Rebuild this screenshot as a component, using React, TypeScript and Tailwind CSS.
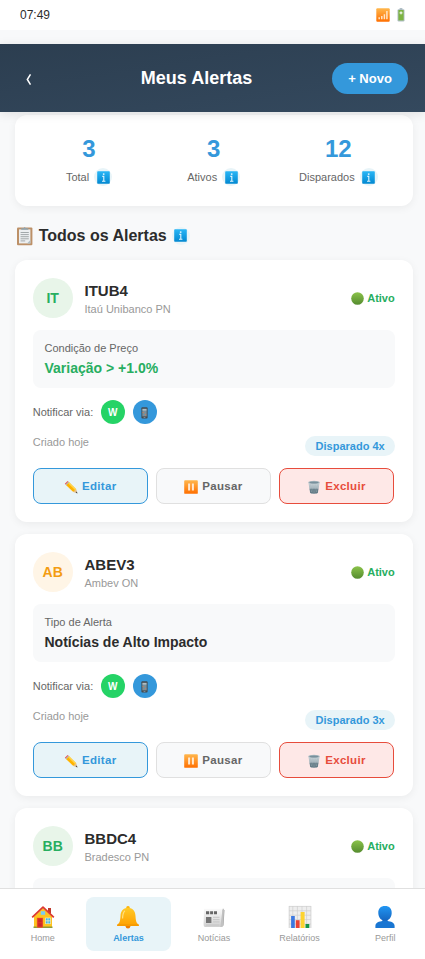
import React from "react";

type Alert = {
  code: string; ticker: string; name: string; label: string; value: string;
  valueColor: string; avatar: string; count: string;
};

const alerts: Alert[] = [
  { code: "IT", ticker: "ITUB4", name: "Itaú Unibanco PN", label: "Condição de Preço", value: "Variação > +1.0%", valueColor: "text-[#27ae60]", avatar: "bg-[#e8f5e9] text-[#27ae60]", count: "4x" },
  { code: "AB", ticker: "ABEV3", name: "Ambev ON", label: "Tipo de Alerta", value: "Notícias de Alto Impacto", valueColor: "text-[#2c2c2c]", avatar: "bg-[#fff5e6] text-[#f39c12]", count: "3x" },
];

const stats = [["3", "Total"], ["3", "Ativos"], ["12", "Disparados"]];

function Gradients() {
  const defs = [
    ["gOrange", "#ffb74d", "#ff6f00"], ["gBlue", "#29b6f6", "#0288d1"], ["gGreen", "#8bc34a", "#558b2f"],
    ["gBell", "#ffca28", "#ffa000"], ["gUser", "#2196f3", "#1565c0"], ["gPaper", "#fafafa", "#d0d0d0"],
    ["gBin", "#cfd8dc", "#78909c"],
  ];
  return (
    <svg width="0" height="0" className="absolute">
      <defs>
        {defs.map(([id, a, b]) => (
          <linearGradient key={id} id={id} x1="0" y1="0" x2="0" y2="1">
            <stop offset="0" stopColor={a} /><stop offset="1" stopColor={b} />
          </linearGradient>
        ))}
      </defs>
    </svg>
  );
}

function SignalIcon() {
  return (
    <svg width="14" height="14" viewBox="0 0 14 14">
      <rect x="0.3" y="0.3" width="13.4" height="13.4" rx="1" fill="url(#gOrange)" />
      <path d="M3.2 9.3v2M5.8 8v3.3M8.4 6.3v5M10.9 3v8.3" stroke="#ffe5c7" strokeWidth="1.5" />
    </svg>
  );
}

function BatteryIcon() {
  return (
    <svg width="8" height="14" viewBox="0 0 8 14">
      <rect x="2.6" y="0.3" width="2.8" height="1.6" fill="#90a4ae" />
      <rect x="0.5" y="1.3" width="7" height="12.2" rx="1.2" fill="#b0bec5" />
      <rect x="1.4" y="2" width="5.2" height="10.4" fill="#7cb342" />
      <path d="M4 3.4v3M2.5 4.9h3" stroke="#fff" strokeWidth="1" />
    </svg>
  );
}

function Info() {
  return (
    <span className="flex h-[18px] w-[18px] items-center justify-center rounded-full bg-[#e8f4f8]">
      <svg width="13" height="13" viewBox="0 0 13 13">
        <rect x="0.2" y="0.2" width="12.6" height="12.6" rx="0.8" fill="url(#gBlue)" />
        <circle cx="6.7" cy="3.1" r="0.95" fill="#e1f5fe" />
        <path d="M5.3 5.4h1.5v4.8M5 10.3h3.4" fill="none" stroke="#e1f5fe" strokeWidth="1.1" />
      </svg>
    </span>
  );
}

function ClipboardIcon() {
  return (
    <svg width="18" height="20" viewBox="0 0 18 20">
      <rect x="1" y="1.6" width="15.4" height="17.6" rx="1" fill="#bc9067" />
      <rect x="3" y="3.4" width="11.4" height="14" fill="#eceff1" />
      <path d="M14.4 14v3.4H11z" fill="#b0bec5" />
      <path d="M5.2 3.8V2.2h2.3L8.7 1l1.2 1.2h2.4v1.6z" fill="#90a4ae" />
      <path d="M4.6 6.5h8.2M4.6 8.6h8.2M4.6 10.7h8.2M4.6 12.8h8.2M4.6 14.9h4.6" stroke="#9aa0a3" strokeWidth="0.9" />
    </svg>
  );
}

function PhoneIcon() {
  return (
    <svg width="7" height="12" viewBox="0 0 7 12">
      <rect x="0.4" y="0.3" width="6.2" height="11.2" rx="0.9" fill="#454b50" />
      <rect x="1.3" y="1.7" width="4.4" height="7.7" fill="#78909c" />
      <path d="M1.6 2h3.8v1.6H1.6z" fill="#b0bec5" />
      <path d="M1.6 5h1.2v1H1.6zM4 7.3h1.2v1H4z" fill="#c77d5b" />
      <path d="M2.6 10.5h1.8" stroke="#90a4ae" strokeWidth="0.7" />
    </svg>
  );
}

function PencilIcon() {
  return (
    <svg width="14" height="14" viewBox="0 0 14 14">
      <path d="M3.6.9.8 3.7 2.2 5.1 5 2.3z" fill="#ef5350" />
      <path d="M4.3 1.6 1.5 4.4l1 1 2.8-2.8z" fill="#b0bec5" />
      <path d="M5.1 2.3 2.2 5.2l7.1 6.8 2.9-2.8z" fill="#ffb300" />
      <path d="M5.1 2.3l-1 1 7.1 6.9 1-1z" fill="#ffd54f" />
      <path d="M12.2 9.2 9.3 12l4 1.3z" fill="#e5bd86" />
      <path d="m12.8 11.6-1.1 1.2 1.8.6z" fill="#424242" />
    </svg>
  );
}

function PauseIcon() {
  return (
    <svg width="14" height="14" viewBox="0 0 14 14">
      <rect x="0.2" y="0.2" width="13.6" height="13.6" rx="0.9" fill="url(#gOrange)" />
      <path d="M5.1 3.5v7M8.9 3.5v7" stroke="#ffe9d2" strokeWidth="2" />
    </svg>
  );
}

function TrashIcon() {
  return (
    <svg width="14" height="14" viewBox="0 0 14 14">
      <path d="M1.4 2.5h11.2l-1.7 10.2c-.8 1.2-7 1.2-7.8 0z" fill="url(#gBin)" />
      <path d="M2.7 8.8h8.6l-.6 3.7c-.8 1.2-6.6 1.2-7.4 0z" fill="#546e7a" />
      <path d="M3.3 4.3l1.1 8M5.7 4.5l.4 8.3M8.3 4.5l-.4 8.3M10.7 4.3l-1.1 8" stroke="#b0bec5" strokeWidth="0.6" />
      <ellipse cx="7" cy="2.4" rx="5.8" ry="1.7" fill="#b0bec5" />
      <ellipse cx="7" cy="2.5" rx="4.6" ry="1" fill="#78909c" />
    </svg>
  );
}

function HomeIcon() {
  return (
    <svg width="24" height="24" viewBox="0 0 24 24">
      <path d="M17 3h3v6l-3-2z" fill="#c0392b" />
      <path d="M3 11.5 12 3l9 8.5v11H3z" fill="#ffc31f" />
      <path d="M2.5 21.5h19V23h-19z" fill="#8d9a3b" />
      <path d="M5.6 12.5h6.6v10H5.6z" fill="#f0a01c" />
      <path d="M6.2 13h5.6v9.5H6.2z" fill="#e3342c" />
      <path d="M7.3 14.3h3.4v3H7.3zM7.3 18.3h3.4v3H7.3z" fill="#c92a25" />
      <rect x="14.2" y="12.7" width="5.5" height="6.3" fill="#fff3c2" />
      <path d="M14.8 13.3h1.9v2.2h-1.9zM17.3 13.3h1.9v2.2h-1.9zM14.8 16.3h1.9v2.2h-1.9zM17.3 16.3h1.9v2.2h-1.9z" fill="#40b7e8" />
      <rect x="9.8" y="6.2" width="4.4" height="3.6" fill="#7cccef" />
      <path d="M1.2 12.3 12 2.2l10.8 10.1" fill="none" stroke="#dc3930" strokeWidth="1.8" strokeLinejoin="round" />
    </svg>
  );
}

function BellIcon() {
  return (
    <svg width="24" height="24" viewBox="0 0 24 24">
      <circle cx="12" cy="21.2" r="2.3" fill="#ef7c00" />
      <circle cx="12" cy="2.9" r="1.8" fill="#ffb300" />
      <path d="M12 2.8c5.2 0 7.3 3.8 7.5 8.2.2 4.6.8 7 3.2 8.7.7.7.2 1.3-.7 1.3H2c-.9 0-1.4-.6-.7-1.3C3.7 18 4.3 15.6 4.5 11c.2-4.4 2.3-8.2 7.5-8.2z" fill="url(#gBell)" />
      <path d="M8.6 6.1C7 7.7 6.7 10 6.6 13" stroke="#ffe082" strokeWidth="1.2" fill="none" strokeLinecap="round" />
      <path d="M1.3 20h21.4" stroke="#ef9600" strokeWidth="1" />
    </svg>
  );
}

function NewsIcon() {
  return (
    <svg width="24" height="24" viewBox="0 0 24 24">
      <path d="M19.5 5h3l-1 15.5-2 1.5z" fill="#9e9e9e" />
      <path d="M2 3.7h18.6V22H3.2Q1.6 22 1.6 20z" fill="url(#gPaper)" />
      <path d="M20.6 3.7h1.5l-1 17L19.3 22h-1z" fill="#c2c2c2" />
      <path d="M4 6.2h3.2v3H4zM8.1 6.2h3v3h-3zM12 6.2h3v3h-3z" fill="#666" />
      <path d="M4 12h5.4v6H4z" fill="#757575" />
      <path d="M11 12.3h6.5M11 14.6h6.5M11 16.9h6.5M4 20h13.5" stroke="#c2c2c2" strokeWidth="0.9" />
    </svg>
  );
}

function ChartIcon() {
  return (
    <svg width="24" height="24" viewBox="0 0 24 24">
      <rect x="0.8" y="1" width="22.4" height="22" fill="#eee" />
      <path d="M1 1.4h22M1 5.8h22M1 10.2h22M1 14.6h22M1 19h22M1.2 1v22M4.8 1v22M9.4 1v22M14 1v22M18.6 1v22M22.9 1v22" stroke="#cfcfcf" strokeWidth="0.7" />
      <rect x="3.1" y="11" width="3.7" height="12" fill="#3c78e0" />
      <rect x="7.8" y="15.2" width="3.8" height="7.8" fill="#ea4335" />
      <rect x="12.6" y="7" width="4" height="16" fill="#fdd32f" />
      <rect x="17.5" y="19" width="3.8" height="4" fill="#179447" />
    </svg>
  );
}

function UserIcon() {
  return (
    <svg width="24" height="24" viewBox="0 0 24 24">
      <path d="M2.4 23v-2.1c0-3.2 4-4.6 7-4.8v-2.2h5.2v2.2c3 .2 7 1.6 7 4.8V23z" fill="#1976d2" />
      <path d="M12 1c4.4 0 7 2.7 6.7 7.2-.2 4.4-3 7.6-6.7 7.6s-6.5-3.2-6.7-7.6C5 3.7 7.6 1 12 1z" fill="url(#gUser)" />
    </svg>
  );
}

const tabs = [
  { label: "Home", Icon: HomeIcon }, { label: "Alertas", Icon: BellIcon }, { label: "Notícias", Icon: NewsIcon },
  { label: "Relatórios", Icon: ChartIcon }, { label: "Perfil", Icon: UserIcon },
];

function CardHead({ code, ticker, name, avatar }: { code: string; ticker: string; name: string; avatar: string }) {
  return (
    <div className="flex h-10 items-center">
      <div className={`flex h-10 w-10 items-center justify-center rounded-full text-sm font-bold ${avatar}`}>{code}</div>
      <div className="ml-[11.8px] flex-1 pt-0.5">
        <div className="text-[15px] leading-[18px] font-bold text-[#2c2c2c]">{ticker}</div>
        <div className="mt-0.5 text-[11px] leading-[15px] text-[#999]">{name}</div>
      </div>
      <div className="flex items-center gap-[3px] text-[11px] font-bold text-[#27ae60]">
        <svg width="13" height="13" viewBox="0 0 13 13"><circle cx="6.5" cy="6.5" r="6.3" fill="url(#gGreen)" /></svg>
        Ativo
      </div>
    </div>
  );
}

const action = "flex h-9 flex-1 items-center justify-center gap-1 rounded-lg border pt-px";

function AlertCard({ a }: { a: Alert }) {
  return (
    <article className="mb-3 h-[262px] rounded-xl bg-white p-[18px] shadow-[0_2px_8px_rgba(0,0,0,0.06)]">
      <CardHead {...a} />
      <div className="mt-3 h-[58px] rounded-lg bg-[#f8f9fa] px-[11.8px] pt-3">
        <div className="text-[11px] leading-[13px] text-[#666]">{a.label}</div>
        <div className={`mt-1 text-sm leading-[18px] font-bold ${a.valueColor}`}>{a.value}</div>
      </div>
      <div className="mt-3 flex h-6 items-center gap-2 text-[11px] text-[#666]">
        <span className="-mr-[0.5px]">Notificar via:</span>
        <span className="flex h-6 w-6 items-center justify-center rounded-full bg-[#25d366] text-[10px] font-bold text-white">W</span>
        <span className="flex h-6 w-6 items-center justify-center rounded-full bg-[#3498db] pt-px"><PhoneIcon /></span>
      </div>
      <div className="mt-3 flex h-5 items-start justify-between text-[11px] text-[#999]">
        <span className="leading-[13px]">Criado hoje</span>
        <span className="h-5 rounded-[10px] bg-[#e8f4f8] pr-[10px] pl-[10.7px] leading-5 font-bold text-[#3498db]">Disparado {a.count}</span>
      </div>
      <div className="mt-3 mr-[0.7px] flex gap-2 text-[11.5px] font-bold tracking-[0.3px]">
        <button className={`${action} border-[#3498db] bg-[#e8f4f8] text-[#3498db]`}><PencilIcon />Editar</button>
        <button className={`${action} border-[#e0e0e0] bg-[#f8f9fa] text-[#666]`}><PauseIcon />Pausar</button>
        <button className={`${action} border-[#e74c3c] bg-[#fee8e7] text-[#e74c3c]`}><TrashIcon />Excluir</button>
      </div>
    </article>
  );
}

export default function App() {
  return (
    <div className="flex h-[959px] w-full flex-col overflow-hidden bg-[#f8f9fa] font-[Arial,'Liberation_Sans',sans-serif]">
      <Gradients />
      <div className="flex h-[30px] shrink-0 items-center justify-between bg-white px-5 text-xs text-[#2c2c2c]">
        <span>07:49</span>
        <span className="flex gap-[7px]"><SignalIcon /><BatteryIcon /></span>
      </div>
      <header className="z-10 mt-[14px] flex h-[68px] shrink-0 items-center justify-between bg-gradient-to-br from-[#2c3e50] to-[#34495e] px-[17px] text-white shadow-[0_2px_10px_rgba(0,0,0,0.1)]">
        <button className="w-11 pl-[9px]" aria-label="Voltar">
          <svg width="6" height="14" viewBox="0 0 6 14" fill="none" className="mt-1"><path d="M4.5 1.3 1.3 6.5 4.5 11.7" stroke="white" strokeWidth="1.5" /></svg>
        </button>
        <h1 className="text-lg font-bold">Meus Alertas</h1>
        <button className="h-[31px] w-[76px] rounded-full bg-[#3498db] pt-px text-[13px] font-bold">+ Novo</button>
      </header>
      <main className="min-h-0 flex-1 overflow-hidden pt-[3px] pr-[12.3px] pl-[14.7px]">
        <section className="grid h-[91px] grid-cols-3 rounded-xl bg-white px-3 pt-[18px] text-center shadow-[0_2px_8px_rgba(0,0,0,0.06)]">
          {stats.map(([n, l]) => (
            <div key={l}>
              <div className="text-2xl leading-[31px] font-bold text-[#3498db]">{n}</div>
              <div className="mt-1 flex items-center justify-center gap-[5px] text-[11px] text-[#666]">{l}<Info /></div>
            </div>
          ))}
        </section>
        <h2 className="flex h-[54px] items-center gap-[5px] pt-[5px] pl-px text-base font-bold text-[#2c2c2c]">
          <ClipboardIcon /><span>Todos os Alertas</span><Info />
        </h2>
        {alerts.map(a => <AlertCard key={a.code} a={a} />)}
        <article className="rounded-t-xl bg-white px-[18px] pt-[18px] shadow-[0_2px_8px_rgba(0,0,0,0.06)]">
          <CardHead code="BB" ticker="BBDC4" name="Bradesco PN" avatar="bg-[#e8f5e9] text-[#27ae60]" />
          <div className="mt-3 h-[58px] rounded-lg bg-[#f8f9fa]" />
        </article>
      </main>
      <nav className="z-10 h-[71px] shrink-0 border-t border-[#e0e0e0] bg-white py-2">
        <div className="grid w-[428px] grid-cols-5">
          {tabs.map(({ label, Icon }) => (
            <div key={label} className={`flex h-[54px] flex-col items-center rounded-lg pt-2 ${label === "Alertas" ? "bg-[#e8f4f8] font-bold text-[#3498db]" : "text-[#999]"}`}>
              <Icon /><span className="mt-1 text-[9px] leading-[10px]">{label}</span>
            </div>
          ))}
        </div>
      </nav>
    </div>
  );
}
